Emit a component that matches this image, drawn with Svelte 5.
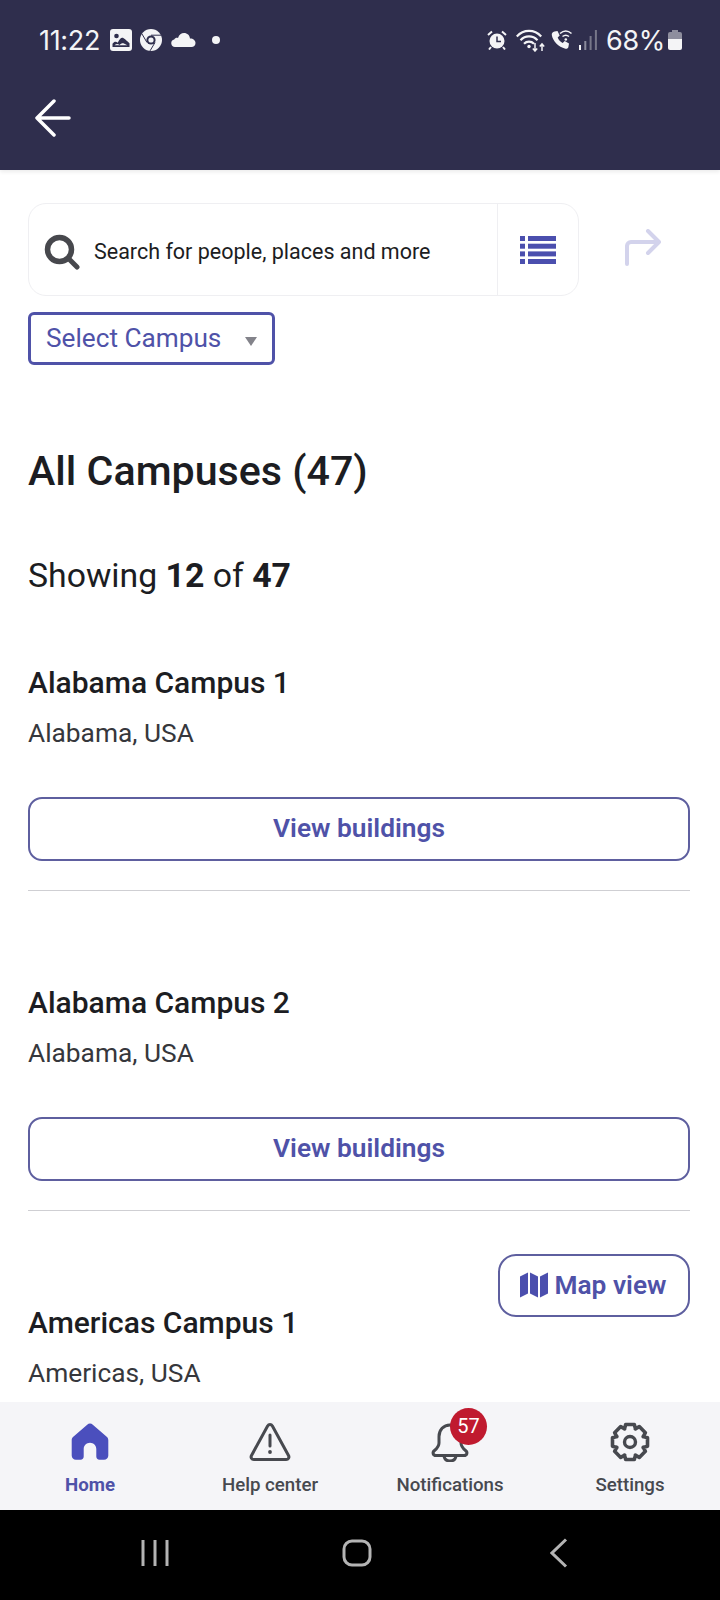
<script>
  const campuses = [
    { name: "Alabama Campus 1", place: "Alabama, USA", buildings: true },
    { name: "Alabama Campus 2", place: "Alabama, USA", buildings: true },
    { name: "Americas Campus 1", place: "Americas, USA", buildings: false },
  ];

  // settings cog outline, 8 teeth
  function gearPoints() {
    const pts = [];
    for (let i = 0; i < 8; i++) {
      const a = (i * Math.PI) / 4;
      const steps = [
        [-0.4, 14.2],
        [-0.24, 18],
        [0.24, 18],
        [0.4, 14.2],
      ];
      for (const [da, r] of steps) {
        const x = 20 + r * Math.cos(a + da - Math.PI / 2);
        const y = 20 + r * Math.sin(a + da - Math.PI / 2);
        pts.push(x.toFixed(1) + "," + y.toFixed(1));
      }
    }
    return pts.join(" ");
  }
</script>

<div class="page">
  <header class="top">
    <div class="status">
      <div class="status-left">
        <span class="time">11:22</span>
        <svg class="ic-photo" width="22" height="22" viewBox="0 0 22 22">
          <rect width="22" height="22" rx="3" fill="#f4f4f6" />
          <circle cx="6.500" cy="7" r="2.300" fill="#2f2e4d" />
          <path d="M2.500 18v-3.200c1.600-2.300 3.600-2.600 5.200-1 1.800-3.600 3-5 4.600-5 1.700 0 3.600 2.500 7.200 5.400V18z" fill="#2f2e4d" />
          <path d="M4.500 16.200c2-1.600 3.600-1.400 5-.2 1.400-1.500 3-2.200 4.400-1.600 1 .4 2 1 3.400 1.800z" fill="#f4f4f6" />
        </svg>
        <svg class="ic-chrome" width="22" height="22" viewBox="0 0 22 22">
          <circle cx="11" cy="11" r="11" fill="#f4f4f6" />
          <circle cx="11" cy="11" r="4.600" fill="#2f2e4d" />
          <circle cx="11" cy="11" r="2.600" fill="#f4f4f6" />
          <path d="M11 6.200h10M15 13.500l-5 8.400M7 13.500L2 5" stroke="#2f2e4d" stroke-width="1" fill="none" />
        </svg>
        <svg class="ic-cloud" width="25" height="14" viewBox="0 0 25 14">
          <path d="M4 14a3.800 3.800 0 0 1-.8-7.500C4 5 5.500 4.600 7 5 8 1.800 10.300 0 13 0c3.300 0 5.600 2.300 6 5.500 2.800-.2 5.500 1.700 5.500 4.500 0 2.500-1.800 4-4 4z" fill="#f4f4f6" />
        </svg>
        <span class="dot"></span>
      </div>
      <div class="status-right">
        <svg class="ic-alarm" width="20" height="20" viewBox="0 0 20 20">
          <circle cx="10" cy="11" r="7.500" fill="#f4f4f6" />
          <path d="M10 6.500V11.500H14" stroke="#2f2e4d" stroke-width="1.500" fill="none" />
          <path d="M1 5l4-3.500M19 5l-4-3.500M4 17l-2 2.500M16 17l2 2.500" stroke="#f4f4f6" stroke-width="2" fill="none" />
        </svg>
        <svg class="ic-wifi" width="29" height="23" viewBox="0 0 29 23">
          <g stroke="#f4f4f6" stroke-width="2.200" fill="none">
            <path d="M0.800 7.500C7.500 0 18.500 0 25.200 7.500" />
            <path d="M4.500 11.200c4.800-5 12.200-5 17 0" />
            <path d="M8 14.800c2.800-2.800 7.200-2.800 10 0" />
          </g>
          <circle cx="13" cy="17.500" r="1.700" fill="#f4f4f6" />
          <path d="M19 14v8M16.800 19.500l2.200 2.500 2.200-2.500M26 22v-7M23.800 17.500l2.200-2.500 2.200 2.500" stroke="#f4f4f6" stroke-width="1.500" fill="none" />
        </svg>
        <svg class="ic-call" width="23" height="21" viewBox="0 0 23 21">
          <path d="M4.500 1.500L7.500 1l2.200 4.500-2 2c.8 2.200 2.800 4.400 5 5.500l2-1.900 4.300 2.400-.6 3.500c-.3 1.400-1.600 2-3 1.700C8.500 17 2.600 10.800 1.800 5c-.2-1.600.9-3 2.700-3.500z" fill="#f4f4f6" />
          <path d="M10 3.500c3.500-3 8-3 11.500 0M12.500 6.500c2-1.600 4.500-1.600 6.500 0" stroke="#f4f4f6" stroke-width="1.600" fill="none" />
          <circle cx="15.800" cy="9.500" r="1.300" fill="#f4f4f6" />
        </svg>
        <svg class="ic-signal" width="18" height="20" viewBox="0 0 18 20">
          <rect x="0" y="15" width="2" height="5" fill="#f4f4f6" />
          <rect x="5.300" y="11" width="2" height="9" fill="#8a8a9c" />
          <rect x="10.600" y="6" width="2" height="14" fill="#777789" />
          <rect x="15.900" y="0" width="2" height="20" fill="#777789" />
        </svg>
        <span class="pct">68%</span>
        <svg class="ic-batt" width="14" height="20" viewBox="0 0 14 20">
          <path d="M4 0h6v2h2a2 2 0 0 1 2 2v5H0V4a2 2 0 0 1 2-2h2z" fill="#8e8e9e" />
          <path d="M0 9h14v9a2 2 0 0 1-2 2H2a2 2 0 0 1-2-2z" fill="#f4f4f6" />
        </svg>
      </div>
    </div>
    <div class="appbar">
      <svg width="36" height="38" viewBox="0 0 36 38">
        <path d="M2 19H34M19 2L2 19L19 36" stroke="#fff" stroke-width="3.500" stroke-linecap="round" stroke-linejoin="round" fill="none" />
      </svg>
    </div>
  </header>

  <main class="content">
    <div class="search-row">
      <div class="search">
        <div class="search-main">
          <svg width="36" height="36" viewBox="0 0 36 36">
            <circle cx="15.500" cy="15.500" r="12" stroke="#47484d" stroke-width="5.500" fill="none" />
            <path d="M25 25l8 8" stroke="#47484d" stroke-width="5" stroke-linecap="round" />
          </svg>
          <span>Search for people, places and more</span>
        </div>
        <div class="search-list">
          <svg width="36" height="28" viewBox="0 0 36 28">
            <g fill="#4b4fae">
              <rect x="0" y="0" width="5" height="5" />
              <rect x="8" y="0" width="28" height="5" />
              <rect x="0" y="7.700" width="5" height="5" />
              <rect x="8" y="7.700" width="28" height="5" />
              <rect x="0" y="15.400" width="5" height="5" />
              <rect x="8" y="15.400" width="28" height="5" />
              <rect x="0" y="23" width="5" height="5" />
              <rect x="8" y="23" width="28" height="5" />
            </g>
          </svg>
        </div>
      </div>
      <div class="share">
        <svg width="38" height="38" viewBox="0 0 38 38">
          <path d="M3 35V17a4 4 0 0 1 4-4H35M24 2l11 11-11 11" stroke="#d3d3ec" stroke-width="4" stroke-linecap="round" stroke-linejoin="round" fill="none" />
        </svg>
      </div>
    </div>

    <div class="select">
      <span>Select Campus</span>
      <i class="caret"></i>
    </div>

    <h1>All Campuses (47)</h1>
    <p class="showing">Showing <b>12</b> of <b>47</b></p>

    {#each campuses as campus}
      <section class="campus" class:last={!campus.buildings}>
        <h2>{campus.name}</h2>
        <p class="place">{campus.place}</p>
        {#if campus.buildings}
          <button class="view">View buildings</button>
        {/if}
      </section>
    {/each}

    <button class="map">
      <svg width="28" height="26" viewBox="0 0 28 26">
        <path d="M0 4.500L8 0.500V21.500L0 25.500zM10 0.500L18 4.500V25.500L10 21.500zM20 4.500L28 0.500V21.500L20 25.500z" fill="#4b4fae" />
      </svg>
      Map view
    </button>
  </main>

  <nav class="tabs">
    <div class="tab active">
      <svg width="40" height="40" viewBox="0 0 40 40">
        <path d="M20 1.500c1 0 2 .4 2.800 1.200L37 15c1 1 1.300 2 1.300 3.300V33.500c0 2.500-1.800 4.300-4.300 4.300h-4.500c-2 0-3.200-1.300-3.200-3.200V27c0-3.500-2.800-6.300-6.300-6.300S13.700 23.500 13.700 27v7.600c0 1.900-1.200 3.200-3.200 3.200H6c-2.500 0-4.300-1.800-4.300-4.300V18.300c0-1.300.3-2.300 1.300-3.300L17.200 2.700c.8-.8 1.800-1.200 2.800-1.200z" fill="#4b4fbd" />
      </svg>
      <span>Home</span>
    </div>
    <div class="tab">
      <svg width="42" height="40" viewBox="0 0 42 40">
        <path d="M21 2.500c1 0 1.800.5 2.400 1.500L39.500 33.500c1.100 2-.2 4-2.300 4H4.800c-2.100 0-3.400-2-2.300-4L18.600 4c.6-1 1.400-1.500 2.400-1.500z" stroke="#47494f" stroke-width="3" stroke-linejoin="round" fill="none" />
        <path d="M21 13v11" stroke="#47494f" stroke-width="3" stroke-linecap="round" />
        <circle cx="21" cy="30" r="1.900" fill="#47494f" />
      </svg>
      <span>Help center</span>
    </div>
    <div class="tab">
      <div class="bell">
        <svg width="40" height="40" viewBox="0 0 40 40">
          <path d="M20 3c-6.500 0-11 5-11 11.500V21c0 3-1.500 5-4.500 7.500-2.500 2-1.500 5 1.500 5h28c3 0 4-3 1.500-5C32.500 26 31 24 31 21v-6.500C31 8 26.500 3 20 3z" stroke="#47494f" stroke-width="3" fill="none" />
          <path d="M14 34c.5 3 3 5 6 5s5.500-2 6-5" stroke="#47494f" stroke-width="3" fill="none" />
        </svg>
        <span class="badge">57</span>
      </div>
      <span>Notifications</span>
    </div>
    <div class="tab">
      <svg width="40" height="40" viewBox="0 0 40 40">
        <polygon points={gearPoints()} stroke="#47494f" stroke-width="3.600" stroke-linejoin="round" fill="none" />
        <circle cx="20" cy="20" r="5.500" stroke="#47494f" stroke-width="3.400" fill="none" />
      </svg>
      <span>Settings</span>
    </div>
  </nav>

  <footer class="sysnav">
    <svg width="30" height="28" viewBox="0 0 30 28">
      <path d="M3 1v26M15 1v26M27 1v26" stroke="#b4b4b4" stroke-width="3" fill="none" />
    </svg>
    <svg width="30" height="28" viewBox="0 0 30 28">
      <rect x="2" y="2" width="26" height="24" rx="8" stroke="#b4b4b4" stroke-width="3" fill="none" />
    </svg>
    <svg width="18" height="30" viewBox="0 0 18 30">
      <path d="M16 1.500L2 15l14 13.500" stroke="#b4b4b4" stroke-width="3" fill="none" />
    </svg>
  </footer>
</div>

<style>
  :global(body) {
    background: #fff;
  }
  .page {
    width: 720px;
    height: 1600px;
    display: flex;
    flex-direction: column;
    overflow: hidden;
    font-family: Roboto, "Liberation Sans", sans-serif;
    color: #1c1d22;
  }

  .top {
    height: 170px;
    flex-shrink: 0;
    background: #2f2e4d;
    box-shadow: 0 2px 4px rgba(0, 0, 0, 0.08);
    position: relative;
    z-index: 1;
  }
  .status {
    height: 80px;
    box-sizing: border-box;
    padding: 0 38px 0 39px;
    display: flex;
    justify-content: space-between;
    align-items: center;
    color: #f4f4f6;
  }
  .status-left,
  .status-right {
    display: flex;
    align-items: center;
  }
  .time,
  .pct {
    font-family: Inter, Roboto, sans-serif;
    font-size: 27px;
    letter-spacing: -0.3px;
  }
  .ic-photo { margin-left: 10px; }
  .ic-chrome { margin-left: 8px; }
  .ic-cloud { margin-left: 9px; }
  .dot {
    width: 8px;
    height: 8px;
    border-radius: 50%;
    background: #f4f4f6;
    margin-left: 16px;
  }
  .ic-wifi { margin-left: 9px; }
  .ic-call { margin-left: 5px; }
  .ic-signal { margin-left: 6px; }
  .pct { margin-left: 9px; }
  .ic-batt { margin-left: 3px; }
  .appbar {
    padding: 19px 0 0 35px;
    display: flex;
  }

  .content {
    flex: 1;
    min-height: 0;
    position: relative;
    padding: 33px 30px 0 28px;
    overflow: hidden;
  }
  .search-row {
    display: flex;
    align-items: center;
  }
  .search {
    width: 551px;
    height: 93px;
    box-sizing: border-box;
    border: 1px solid #efeff2;
    border-radius: 18px;
    display: flex;
  }
  .search-main {
    flex: 1;
    display: flex;
    align-items: center;
    padding-left: 15px;
    padding-top: 4px;
    gap: 14px;
    font-size: 21.500px;
    color: #1c1d22;
  }
  .search-list {
    width: 80px;
    border-left: 1px solid #efeff2;
    display: flex;
    align-items: center;
    justify-content: center;
  }
  .share {
    margin-left: 45px;
    margin-top: -3px;
    display: flex;
  }

  .select {
    width: 247px;
    height: 53px;
    box-sizing: border-box;
    margin-top: 16px;
    border: 3px solid #4f52a8;
    border-radius: 6px;
    padding: 0 15px 2px;
    display: flex;
    align-items: center;
    justify-content: space-between;
    font-size: 26.200px;
    color: #4f52a8;
  }
  .caret {
    width: 0;
    height: 0;
    margin-top: 8px;
    border-left: 6px solid transparent;
    border-right: 6px solid transparent;
    border-top: 9px solid #83838a;
  }

  h1 {
    margin: 81px 0 0;
    font-size: 41.200px;
    line-height: 50px;
    font-weight: 500;
  }
  .showing {
    margin: 59px 0 0;
    font-size: 33.800px;
    line-height: 42px;
  }
  .showing b {
    font-weight: 700;
  }

  .campus {
    margin-top: 68px;
    height: 226px;
    box-sizing: border-box;
    border-bottom: 1px solid #cfcfd3;
  }
  .campus + .campus {
    margin-top: 94px;
  }
  .campus.last {
    border-bottom: none;
  }
  .campus h2 {
    margin: 0;
    font-size: 30px;
    line-height: 36px;
    font-weight: 500;
  }
  .campus .place {
    margin: 14px 0 0;
    font-size: 26.300px;
    line-height: 36px;
    color: #36373c;
  }
  .view {
    display: block;
    width: 100%;
    height: 64px;
    margin-top: 46px;
    padding-bottom: 3px;
    background: #fff;
    border: 2px solid #5e5f9f;
    border-radius: 14px;
    font-family: inherit;
    font-size: 26.300px;
    font-weight: 600;
    color: #4f52a8;
  }

  .map {
    position: absolute;
    right: 30px;
    top: 1084px;
    width: 192px;
    height: 63px;
    background: #fff;
    border: 2px solid #5e5f9f;
    border-radius: 18px;
    display: flex;
    align-items: center;
    justify-content: center;
    gap: 6px;
    padding: 0 6px 2px 5px;
    font-family: inherit;
    font-size: 26.300px;
    font-weight: 600;
    color: #4f52a8;
  }

  .tabs {
    height: 108px;
    flex-shrink: 0;
    background: #f5f5f8;
    display: grid;
    grid-template-columns: repeat(4, 180px);
    position: relative;
  }
  .tab {
    display: flex;
    flex-direction: column;
    align-items: center;
    padding-top: 20px;
    gap: 10px;
    font-size: 18.700px;
    font-weight: 500;
    line-height: 26px;
    color: #47494f;
  }
  .tab svg {
    display: block;
  }
  .tab.active {
    color: #4f52a8;
    font-weight: 700;
  }
  .bell {
    position: relative;
    width: 40px;
    height: 40px;
  }
  .badge {
    position: absolute;
    left: 20px;
    top: -14px;
    width: 37px;
    height: 37px;
    border-radius: 50%;
    background: #c01a2f;
    color: #fff;
    font-size: 20px;
    font-weight: 400;
    line-height: 37px;
    text-align: center;
  }

  .sysnav {
    height: 90px;
    box-sizing: border-box;
    padding-bottom: 5px;
    flex-shrink: 0;
    background: #000;
    display: flex;
    align-items: center;
  }
  .sysnav svg:nth-child(1) {
    margin-left: 140px;
  }
  .sysnav svg:nth-child(2) {
    margin-left: 172px;
  }
  .sysnav svg:nth-child(3) {
    margin-left: 178px;
  }
</style>
